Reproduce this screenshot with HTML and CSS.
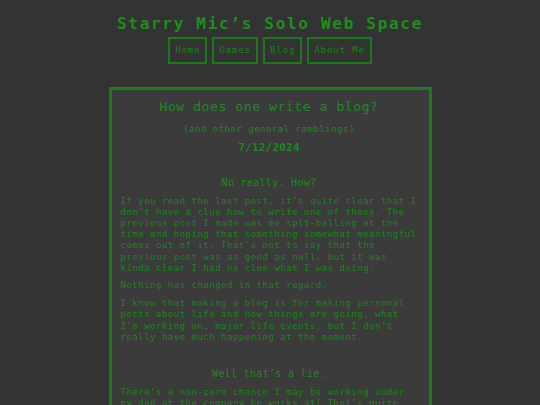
FILE: index.html
```html
<!DOCTYPE html>
<html>
<head>
<meta charset="utf-8">
<link rel="stylesheet" href="styles.css">
</head>
<body>
<header class="site-header">
  <h1 class="site-title">Starry Mic’s Solo Web Space</h1>
  <nav class="nav">
    <a class="nav-btn" href="#">Home</a>
    <a class="nav-btn" href="#">Games</a>
    <a class="nav-btn" href="#">Blog</a>
    <a class="nav-btn" href="#">About Me</a>
  </nav>
</header>
<main class="post">
  <h2 class="post-title">How does one write a blog?</h2>
  <p class="post-sub">(and other general ramblings)</p>
  <p class="post-date">7/12/2024</p>
  <h3 class="post-head">No really. How?</h3>
  <p class="para">If you read the last post, it’s quite clear that I don’t have a clue how to write one of these. The previous post I made was me spit-balling at the time and hoping that something somewhat meaningful comes out of it. That’s not to say that the previous post was as good as null, but it was kinda clear I had no clue what I was doing.</p>
  <p class="para">Nothing has changed in that regard.</p>
  <p class="para">I know that making a blog is for making personal posts about life and how things are going, what I’m working on, major life events, but I don’t really have much happening at the moment.</p>
  <h3 class="post-head post-head-gap">Well that’s a lie.</h3>
  <p class="para">There’s a non-zero chance I may be working under my dad at the company he works at! That’s quite exciting if it does end up happening.</p>
</main>
</body>
</html>
```
FILE: styles.css
```css
html, body {
  margin: 0;
  padding: 0;
  background: #333333;
  height: 100%;
  overflow: hidden;
}
body {
  font-family: "DejaVu Sans Mono", "Liberation Mono", monospace;
  color: #1c8a1c;
}
.site-header {
  display: flex;
  flex-direction: column;
  align-items: center;
  padding-top: 14px;
}
.site-title {
  margin: 0;
  font-size: 16px;
  line-height: 20px;
  letter-spacing: 1.7px;
  font-weight: bold;
  color: #1b8f1b;
}
.nav {
  display: flex;
  gap: 5px;
  margin-top: 3px;
}
.nav-btn {
  display: block;
  border: 2px solid #1a7a1a;
  padding: 6px 5px;
  font-size: 9px;
  line-height: 11px;
  letter-spacing: 0.9px;
  color: #1a821a;
  text-decoration: none;
}
.post {
  width: 297px;
  margin: 23px auto 0;
  border: 3px solid #1a7f1a;
  background: #3b3b3b;
  padding: 6px 11px 0 9px;
  box-sizing: content-box;
  height: 400px;
}
.post-title {
  margin: 2px 0 0;
  text-align: center;
  font-size: 13px;
  line-height: 17px;
  letter-spacing: 0.6px;
  font-weight: normal;
  color: #1b8c1b;
}
.post-sub {
  margin: 9px 0 0;
  text-align: center;
  font-size: 9px;
  line-height: 11px;
  letter-spacing: 0.5px;
}
.post-date {
  margin: 6px 0 0;
  text-align: center;
  font-size: 11px;
  line-height: 13px;
  letter-spacing: 0.2px;
  font-weight: bold;
}
.post-head {
  margin: 22px 0 0;
  text-align: center;
  font-size: 10px;
  line-height: 13px;
  letter-spacing: 0.3px;
  font-weight: normal;
}
.post-head-gap {
  margin-top: 24.5px;
}
.para {
  margin: 6.5px 0 0;
  font-size: 9px;
  line-height: 11.2px;
  letter-spacing: 0.5px;
  color: #1a851a;
}
```
